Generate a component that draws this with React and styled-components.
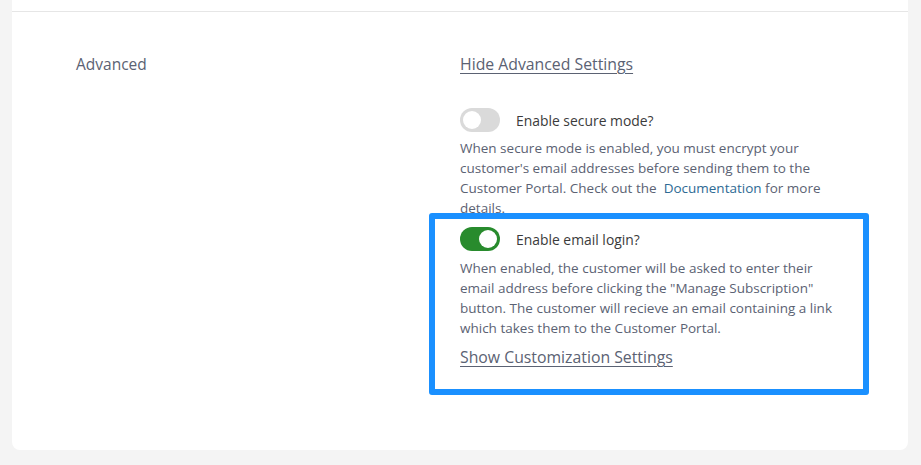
import React from "react";
import styled, { createGlobalStyle } from "styled-components";

const GlobalStyle = createGlobalStyle`
  body {
    margin: 0;
    background: #f4f4f4;
    font-family: "Open Sans", "Noto Sans", sans-serif;
  }
`;

const Card = styled.div`
  margin: 0 13px 15px 12px;
  background: #fff;
  border-radius: 0 0 8px 8px;
`;

const TopStrip = styled.div`
  height: 11px;
  border-bottom: 1px solid #e6e6e6;
`;

const Section = styled.div`
  display: grid;
  grid-template-columns: 384px 386px;
  padding: 42px 0 55px 64px;
`;

const SectionTitle = styled.div`
  font-size: 15.5px;
  line-height: 20px;
  color: #5b6273;
`;

const Column = styled.div`
  display: flex;
  flex-direction: column;
`;

const TextLink = styled.a`
  align-self: flex-start;
  font-size: 15.8px;
  line-height: 20px;
  color: #5b6273;
  text-decoration: underline;
  text-underline-offset: 3px;
  cursor: pointer;
  margin-top: ${(p) => p.$top || 0}px;
`;

const ToggleRow = styled.label`
  display: flex;
  align-items: center;
  gap: 16px;
  margin-top: ${(p) => p.$top || 0}px;
  font-size: 13.9px;
  color: #3b3b3b;
`;

const Track = styled.span`
  position: relative;
  width: 40px;
  height: 24px;
  border-radius: 12px;
  background: ${(p) => (p.$on ? "#288b2d" : "#dadada")};
  flex-shrink: 0;

  &::after {
    content: "";
    position: absolute;
    top: 3px;
    left: ${(p) => (p.$on ? "19px" : "3px")};
    width: 18px;
    height: 18px;
    border-radius: 50%;
    background: #fff;
  }
`;

const Description = styled.p`
  margin: ${(p) => p.$top || 6}px 0 0;
  font-size: 13.5px;
  line-height: 20px;
  color: #5b6273;
`;

const DocLink = styled.a`
  color: #2e6a94;
  text-decoration: none;
  cursor: pointer;
`;

const Highlight = styled.div`
  display: flex;
  flex-direction: column;
  margin: -5px 0 0 -31px;
  width: 440px;
  box-sizing: border-box;
  border: 6px solid #1a90ff;
  border-radius: 3px;
  padding: 8px 19px 22px 25px;
`;

function Toggle({ on, label, top }) {
  return (
    <ToggleRow $top={top}>
      <Track $on={on} />
      {label}
    </ToggleRow>
  );
}

export default function App() {
  return (
    <>
      <GlobalStyle />
      <Card>
        <TopStrip />
        <Section>
          <SectionTitle>Advanced</SectionTitle>
          <Column>
            <TextLink>Hide Advanced Settings</TextLink>
            <Toggle top={34} label="Enable secure mode?" />
            <Description>
              When secure mode is enabled, you must encrypt your customer's
              email addresses before sending them to the Customer Portal. Check
              out the{"\u00a0 "}
              <DocLink>Documentation</DocLink> for more details.
            </Description>
            <Highlight>
              <Toggle on label="Enable email login?" />
              <Description $top={7}>
                When enabled, the customer will be asked to enter their email
                address before clicking the "Manage Subscription" button. The
                customer will recieve an email containing a link which takes
                them to the Customer Portal.
              </Description>
              <TextLink $top={9}>Show Customization Settings</TextLink>
            </Highlight>
          </Column>
        </Section>
      </Card>
    </>
  );
}
